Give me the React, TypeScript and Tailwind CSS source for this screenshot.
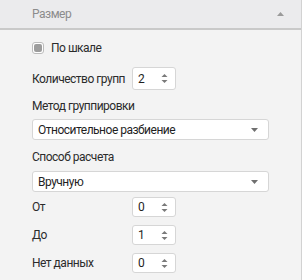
import React from 'react';

function Spinner({ value, className = '' }: { value: string; className?: string }) {
  return (
    <div
      className={`flex w-[44px] shrink-0 items-center justify-between rounded-[3px] border border-[#d6d6d6] bg-white pl-[5px] pr-[7px] ${className}`}
    >
      <span className="text-[12px] text-[#1f1f1f]">{value}</span>
      <svg width="7" height="11" viewBox="0 0 7 11" className="text-[#7a7a7a]">
        <path d="M3.5 1 L6.5 4 L0.5 4 Z" fill="currentColor" />
        <path d="M0.5 7 L6.5 7 L3.5 10 Z" fill="currentColor" />
      </svg>
    </div>
  );
}

function Select({ value, className = '' }: { value: string; className?: string }) {
  return (
    <div
      className={`flex h-[21px] w-[237px] items-center justify-between rounded-[3px] border border-[#d6d6d6] bg-white pl-[5px] pr-[10px] ${className}`}
    >
      <span className="text-[12px] text-[#1f1f1f]">{value}</span>
      <svg width="7" height="4" viewBox="0 0 7 4" className="text-[#6f6f6f]">
        <path d="M0 0 L7 0 L3.5 4 Z" fill="currentColor" />
      </svg>
    </div>
  );
}

export default function App() {
  return (
    <div
      className="flex h-[280px] w-[303px] bg-white tracking-[-0.5px]"
      style={{ fontFamily: 'Roboto, "Liberation Sans", sans-serif' }}
    >
      <div className="flex w-[302px] flex-col border-r border-[#d2d2d2] bg-[#f3f3f3]">
        {/* header */}
        <div className="flex h-[30px] shrink-0 items-center justify-between border-b-2 border-[#c9c9c9] bg-[#ebebed] pl-[32px] pr-[17px]">
          <span className="text-[12px] leading-[16px] text-[#8c8c8c]">Размер</span>
          <svg width="7" height="4" viewBox="0 0 7 4" className="text-[#9a9a9a]">
            <path d="M3.5 0 L7 4 L0 4 Z" fill="currentColor" />
          </svg>
        </div>

        <div className="flex flex-col pl-[32px] text-[12px] leading-[16px] text-[#2b2b2b]">
          <label className="mt-[10px] flex h-[16px] items-center gap-[7px]">
            <span className="flex h-[12px] w-[12px] items-center justify-center rounded-[3px] border border-[#bcbcbc] bg-white">
              <span className="h-[8px] w-[8px] rounded-[2px] bg-[#9d9d9d]" />
            </span>
            По шкале
          </label>

          <div className="mt-[11px] flex items-center">
            <span className="w-[100px] whitespace-nowrap">Количество групп</span>
            <Spinner value="2" className="h-[23px]" />
          </div>

          <div className="mt-[8px]">Метод группировки</div>
          <Select value="Относительное разбиение" className="mt-[5px]" />

          <div className="mt-[9px]">Способ расчета</div>
          <Select value="Вручную" className="mt-[6px]" />

          <div className="mt-[5px] flex flex-col gap-[8px]">
            {[
              ['От', '0'],
              ['До', '1'],
              ['Нет данных', '0'],
            ].map(([label, v]) => (
              <div key={label} className="flex items-center">
                <span className="w-[100px]">{label}</span>
                <Spinner value={v} className="h-[20px]" />
              </div>
            ))}
          </div>
        </div>
      </div>
    </div>
  );
}
